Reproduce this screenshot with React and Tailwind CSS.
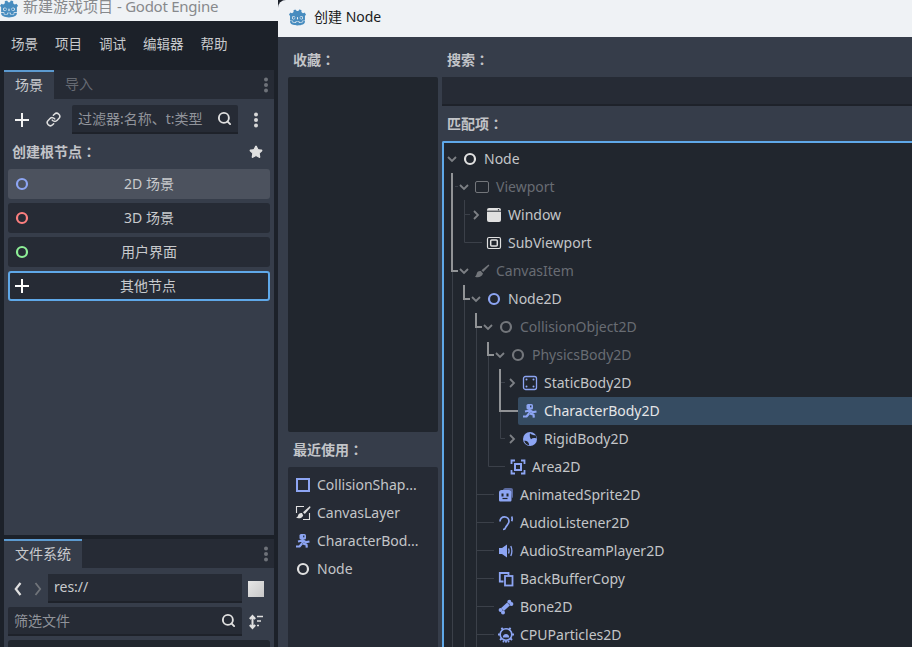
import React from "react";
import { Search, Star, Link as LinkIcon } from "lucide-react";
import { SiGodotengine } from "react-icons/si";

const B = "#8da5f3";
const W = "#e0e0e0";
const D = "#73767b";

const Svg = ({ children, className = "" }) => (
  <svg width="16" height="16" viewBox="0 0 16 16" fill="none" className={"shrink-0 " + className}>{children}</svg>
);

const Ring = ({ c = W, sw = 2.2 }) => (
  <Svg><circle cx="8" cy="8" r="5" stroke={c} strokeWidth={sw} /></Svg>
);
const PlusI = ({ c = "#f2f2f2", className = "" }) => (
  <Svg className={className}><path d="M8 1v14M1 8h14" stroke={c} strokeWidth="2" /></Svg>
);
const ViewportI = () => (
  <Svg><rect x="1.500" y="2.500" width="13" height="11" rx="1.500" stroke={D} strokeWidth="1" /></Svg>
);
const WindowI = () => (
  <Svg><path d="M3 1h10a2 2 0 0 1 2 2v10a2 2 0 0 1-2 2H3a2 2 0 0 1-2-2V3a2 2 0 0 1 2-2z" fill={W} /><path d="M1 4.200h14" stroke="#21262e" strokeWidth="1" /><circle cx="12.500" cy="2.700" r=".7" fill="#21262e" /></Svg>
);
const SubViewportI = () => (
  <Svg><rect x="1.500" y="2.500" width="13" height="11" rx="1.500" stroke={W} strokeWidth="1.200" /><rect x="4.700" y="5" width="6.600" height="6" rx="1" stroke={W} strokeWidth="1.500" /></Svg>
);
const Brush = ({ c = D }) => (
  <Svg><path d="M14.500 1.500 7.500 7.200l1.700 1.700 6.200-6.500z" fill={c} /><path d="M6.800 8c-2.400-.4-3.800 1-4.100 2.800-.2 1.100-.7 2.100-1.700 2.900 2.800 1.100 6.800.6 8-3.200z" fill={c} /></Svg>
);
const StaticI = () => (
  <Svg><rect x="1.500" y="1.500" width="13" height="13" rx="2" stroke={B} strokeWidth="1.300" /><g fill={B}><circle cx="4.500" cy="4.500" r="1" /><circle cx="11.500" cy="4.500" r="1" /><circle cx="4.500" cy="11.500" r="1" /><circle cx="11.500" cy="11.500" r="1" /></g></Svg>
);
const CharI = () => (
  <Svg>
    <rect x="4.500" y="1" width="6.500" height="5.500" rx="1.600" fill={B} />
    <rect x="8" y="2.500" width="1.400" height="1.800" fill="#2f3f55" />
    <path d="M7.500 6v4.500M7.500 7.500 3 8.500M8 7.500l3 1.700 3.500-.7M7 10.500l-2.500 3H1M8 10.500l3.500 1.200.3 3" stroke={B} strokeWidth="2.200" strokeLinejoin="round" />
  </Svg>
);
const RigidI = () => (
  <Svg><circle cx="8" cy="8" r="7" fill={B} /><path d="M8 2.200c1.600 1.400 3.400 2 5.600 2 .6 1 .9 2.400.8 3.400-1.800-.8-4-.6-5.400.6C7.600 6.400 7.600 4 8 2.200z" fill="#21262e" /><path d="M2.200 9.800c2-.6 3.800.4 4.600 2.600l.4 1.900c-2.200-.1-4.200-2-5-4.500z" fill="#21262e" /></Svg>
);
const AreaI = () => (
  <Svg><path d="M1.500 5V1.500H5M11 1.500h3.500V5M14.500 11v3.500H11M5 14.500H1.500V11" stroke={B} strokeWidth="1.800" /><rect x="5" y="5" width="6" height="6" stroke={B} strokeWidth="2" /></Svg>
);
const AnimI = () => (
  <Svg><path d="M5 3c.4-1.300 1.200-2 2.500-2H13c1.200 0 2 .8 2 2v6.500c0 .8-.3 1.300-1 1.700L13 3.500z" fill="#5b6a9f" /><path d="M3.500 3h7.500c1.500 0 2.500 1 2.500 2.500v7.500c0 1-.6 1.500-1.500 1.500H2.500C1.600 14.500 1 14 1 13V5.500C1 4 2 3 3.500 3z" fill={B} /><rect x="3.500" y="6.500" width="2" height="3" fill="#21262e" /><rect x="8.500" y="6.500" width="2" height="3" fill="#21262e" /><path d="M4.500 11.500h5" stroke="#21262e" strokeWidth="1.200" /></Svg>
);
const EarI = () => (
  <Svg><path d="M2 6.500C2 3.500 4 1.800 6.500 1.800S11 3.800 11 6.200c0 3.300-2.700 3.800-3.400 6.300-.3 1.200-1.200 2-2.600 2" stroke={B} strokeWidth="1.700" /><path d="M13.800 1.500c.5 1.500.5 3 0 4.800" stroke={B} strokeWidth="1.700" /></Svg>
);
const SpeakerI = () => (
  <Svg><path d="M1 5h3l5-3.500v13L4 11H1z" fill={B} /><path d="M10.500 5.500c.7 1.600.7 3.400 0 5M12.800 3c1.300 3 1.300 7 0 10" stroke={B} strokeWidth="1.300" /></Svg>
);
const BackI = () => (
  <Svg><path d="M5.500 10.500H1.800V2h8.700v2.500" stroke={B} strokeWidth="1.800" /><rect x="7" y="5" width="7.500" height="9.500" stroke={B} strokeWidth="1.800" /></Svg>
);
const BoneI = () => (
  <Svg><path d="M4.500 10.500 10.500 5" stroke={B} strokeWidth="4" /><circle cx="11.300" cy="2.800" r="2" fill={B} /><circle cx="13.400" cy="5" r="2" fill={B} /><circle cx="2.600" cy="11" r="2" fill={B} /><circle cx="5" cy="13.400" r="2" fill={B} /></Svg>
);
const CpuI = () => (
  <Svg>
    <circle cx="8" cy="7.500" r="5.800" stroke={B} strokeWidth="1.600" />
    <path d="M3.500 .8 5 3M12.500 .8 11 3M0 7.500h2M14 7.500h2M2 13l1.500-1.500M14 13l-1.500-1.500" stroke={B} strokeWidth="1.900" />
    <path d="M4.800 10.500c0-2.200 1.300-3.500 3.200-3.500s3.200 1.300 3.200 3.500z" fill={B} />
    <g fill={B}><circle cx="5.500" cy="14.500" r="1" /><circle cx="8" cy="14.800" r="1" /><circle cx="10.500" cy="14.500" r="1" /></g>
  </Svg>
);
const CollShapeI = () => (
  <Svg><rect x="2" y="2" width="12" height="12" stroke={B} strokeWidth="2" /></Svg>
);
const CanvasLayerI = () => (
  <Svg><path d="M9 1.500H1.500V8M14.500 8v6.500H8" stroke={W} strokeWidth="1.100" /><path d="M15 1 8 7.200l1.800 1.800L15.500 2.500z" fill={W} /><path d="M7 8c-2.300-.3-3.600.8-3.900 2.400-.2 1.100-.9 1.700-2.100 2.300 2.600 1 6 .6 7.200-2.300z" fill={W} /></Svg>
);
const SearchI = () => <Search size={15} color={W} strokeWidth={3} className="shrink-0" />;

const rows = [
  { l: 0, t: "Node", i: <Ring />, a: "d" },
  { l: 1, t: "Viewport", i: <ViewportI />, a: "d", dim: true },
  { l: 2, t: "Window", i: <WindowI />, a: "r" },
  { l: 2, t: "SubViewport", i: <SubViewportI /> },
  { l: 1, t: "CanvasItem", i: <Brush />, a: "d", dim: true },
  { l: 2, t: "Node2D", i: <Ring c={B} />, a: "d" },
  { l: 3, t: "CollisionObject2D", i: <Ring c={D} />, a: "d", dim: true },
  { l: 4, t: "PhysicsBody2D", i: <Ring c={D} />, a: "d", dim: true },
  { l: 5, t: "StaticBody2D", i: <StaticI />, a: "r" },
  { l: 5, t: "CharacterBody2D", i: <CharI />, sel: true },
  { l: 5, t: "RigidBody2D", i: <RigidI />, a: "r" },
  { l: 4, t: "Area2D", i: <AreaI /> },
  { l: 3, t: "AnimatedSprite2D", i: <AnimI /> },
  { l: 3, t: "AudioListener2D", i: <EarI /> },
  { l: 3, t: "AudioStreamPlayer2D", i: <SpeakerI /> },
  { l: 3, t: "BackBufferCopy", i: <BackI /> },
  { l: 3, t: "Bone2D", i: <BoneI /> },
  { l: 3, t: "CPUParticles2D", i: <CpuI /> },
];
const indent = ["pl-0", "pl-[12px]", "pl-[24px]", "pl-[36px]", "pl-[48px]", "pl-[60px]"];

const Arrow = ({ a }) => (
  <span className="w-[16px] flex justify-center shrink-0">
    {a === "d" && <svg width="10" height="10" viewBox="0 0 10 10" fill="none"><path d="M1 3 5 7l4-4" stroke="#7d8085" strokeWidth="1.800" /></svg>}
    {a === "r" && <svg width="10" height="10" viewBox="0 0 10 10" fill="none"><path d="M3 1 7 5 3 9" stroke="#7d8085" strokeWidth="1.800" /></svg>}
  </span>
);

const Thin = "#3b4049";
const Thick = "#919396";

const TreeLines = () => (
  <svg className="absolute left-0 top-0 pointer-events-none" width="470" height="506" viewBox="444 143 470 506" fill="none">
    <g stroke={Thin} strokeWidth="1">
      <path d="M452.500 270V647M464.500 298V647M476.500 326V647" />
      <path d="M455 186.500H458" />
      <path d="M464.500 200V242.500H482M464.500 214.500H470" />
      <path d="M488.500 354V466.500H505" />
      <path d="M500.500 410V438.500H505M500.500 382.500H505" />
      <path d="M476.500 494.500H494M476.500 522.500H494M476.500 550.500H494M476.500 578.500H494M476.500 606.500H494M476.500 634.500H494" />
    </g>
    <g stroke={Thick} strokeWidth="2">
      <path d="M452 173V271H458" />
      <path d="M464 285V299H470" />
      <path d="M476 313V327H482" />
      <path d="M488 342V355H494" />
      <path d="M500 369V411H518" />
    </g>
  </svg>
);

const Row = ({ r }) => (
  <div className={"h-[28px] flex items-center " + indent[r.l]}>
    <Arrow a={r.a} />
    <div className={"h-[28px] flex-1 min-w-0 ml-[-2px] pl-[4px] flex items-center gap-[6px] rounded-l-[2px] relative " + (r.sel ? "bg-[#364c62] text-[#e4e5e7]" : r.dim ? "text-[#686c73]" : "text-[#c3c5c8]")}>
      {r.i}
      <span className="whitespace-nowrap">{r.t}</span>
    </div>
  </div>
);

const Label = ({ text, className = "" }) => (
  <div className={"h-[20px] overflow-hidden font-bold text-[#c2c4c8] text-[14px] leading-[20px] " + className}>
    {text}<span className="leading-none font-['Noto_Sans_CJK_TC',sans-serif]">：</span>
  </div>
);

const SceneBtn = ({ icon, text, active, focus }) => (
  <div className={"h-[30px] flex items-center pr-[2px] rounded-[3px] " + (active ? "bg-[#4c525e]" : "bg-[#262b35]") + (focus ? " border-2 border-[#5fa8e8] pl-[4px] pr-0" : " pl-[6px]")}>
    {icon}
    <span className="flex-1 text-center text-[#c8cacd]">{text}</span>
  </div>
);

const Dots = ({ c = "#8a8d92" }) => (
  <svg width="6" height="16" viewBox="0 0 6 16" className="shrink-0"><g fill={c}><circle cx="3" cy="2.500" r="2" /><circle cx="3" cy="8" r="2" /><circle cx="3" cy="13.500" r="2" /></g></svg>
);

const SortI = () => (
  <Svg>
    <path d="M4.500 2v12M1.800 5 4.500 2 7.200 5M1.800 11l2.700 3 2.700-3" stroke={W} strokeWidth="2" />
    <path d="M9 2.500h6M9 7h4M9 11.500h2" stroke={W} strokeWidth="1.600" />
  </Svg>
);

const recents = [
  [<CollShapeI />, "CollisionShap..."],
  [<CanvasLayerI />, "CanvasLayer"],
  [<CharI />, "CharacterBod..."],
  [<Ring />, "Node"],
];

export default function App() {
  return (
    <div className="w-[912px] h-[647px] overflow-hidden flex bg-[#1c2129] text-[14px] leading-[20px] font-['Noto_Sans','Noto_Sans_CJK_SC',sans-serif]">
      {/* main editor window */}
      <div className="w-[278px] shrink-0 flex flex-col">
        <div className="h-[21px] bg-[#eff2f5] overflow-hidden flex items-end pb-[5px] text-[15px] text-[#87898c] whitespace-nowrap">
          <SiGodotengine size={18} color="#478cbf" className="shrink-0 mb-[-2px] mr-[5px]" />
          <span>新建游戏项目 <span className="tracking-[-0.25px]">- Godot Engine</span></span>
        </div>
        <div className="h-[49px] flex items-center pb-[4px] pl-[11px] gap-[17px] text-[#c8cacd] text-[13.5px]">
          <span>场景</span><span>项目</span><span>调试</span><span>编辑器</span><span>帮助</span>
        </div>
        {/* scene dock */}
        <div className="ml-[4px] w-[270px] h-[465px] bg-[#363d4a] flex flex-col rounded-t-[3px]">
          <div className="h-[29px] bg-[#262b35] flex items-stretch pr-[5px]">
            <div className="w-[50px] bg-[#363d4a] border-t-2 border-[#5c9ad0] pb-[2px] flex items-center justify-center text-[#c8cacd]">场景</div>
            <div className="w-[50px] flex items-center justify-center pb-[1px] text-[#666a72]">导入</div>
            <div className="flex-1" />
            <div className="flex items-center"><Dots c="#6e7279" /></div>
          </div>
          <div className="h-[29px] mt-[6px] flex items-center">
            <PlusI className="ml-[10px]" />
            <LinkIcon size={15} color={W} strokeWidth={2.4} className="ml-[16px] shrink-0" />
            <div className="ml-[11px] w-[166px] h-[29px] bg-[#262b35] border-b-2 border-[#1e222a] rounded-t-[2px] flex items-center pl-[6px] pr-[6px] text-[#90939a]">
              <span className="flex-1 whitespace-nowrap">过滤器:名称、t:类型</span>
              <SearchI />
            </div>
            <div className="ml-[15px]"><Dots c="#d8d8d8" /></div>
          </div>
          <div className="h-[20px] mt-[8px] pl-[8px] pr-[11px] flex items-center justify-between">
            <Label text="创建根节点" />
            <Star size={14} color={W} fill={W} />
          </div>
          <div className="mt-[7px] mx-[4px] flex flex-col gap-[4px]">
            <SceneBtn active icon={<Ring c={B} />} text="2D 场景" />
            <SceneBtn icon={<Ring c="#fc7f7f" />} text="3D 场景" />
            <SceneBtn icon={<Ring c="#8eef97" />} text="用户界面" />
            <SceneBtn focus icon={<PlusI c="#ffffff" />} text="其他节点" />
          </div>
        </div>
        {/* file system dock */}
        <div className="ml-[4px] w-[270px] mt-[4px] flex-1 bg-[#363d4a] flex flex-col rounded-t-[3px]">
          <div className="h-[29px] bg-[#262b35] flex items-stretch pr-[5px]">
            <div className="w-[78px] bg-[#363d4a] border-t-2 border-[#5c9ad0] pb-[2px] flex items-center justify-center text-[#c8cacd]">文件系统</div>
            <div className="flex-1" />
            <div className="flex items-center"><Dots c="#6e7279" /></div>
          </div>
          <div className="h-[29px] mt-[6px] flex items-center">
            <svg width="8" height="14" viewBox="0 0 8 14" fill="none" className="ml-[10px] shrink-0"><path d="M6.500 1 1.800 7l4.700 6" stroke={W} strokeWidth="2.200" /></svg>
            <svg width="8" height="14" viewBox="0 0 8 14" fill="none" className="ml-[12px] shrink-0"><path d="M1.500 1 6.200 7l-4.700 6" stroke="#70747a" strokeWidth="1.800" /></svg>
            <div className="ml-[6px] w-[194px] h-[29px] bg-[#262b35] border-b-2 border-[#1e222a] pl-[6px] pb-[1px] flex items-center text-[#c8cacd]">res://</div>
            <div className="ml-[6px] w-[16px] h-[16px] bg-gradient-to-br from-[#e6e6e6] to-[#c8c8c8]" />
          </div>
          <div className="h-[29px] mt-[4px] flex items-center">
            <div className="ml-[4px] w-[234px] h-[29px] bg-[#262b35] border-b-2 border-[#1e222a] rounded-t-[2px] px-[6px] flex items-center text-[#90939a]">
              <span className="flex-1">筛选文件</span>
              <SearchI />
            </div>
            <div className="ml-[6px]"><SortI /></div>
          </div>
          <div className="mt-[4px] mx-[4px] flex-1 bg-[#21262e] rounded-t-[3px]" />
        </div>
      </div>

      {/* create node dialog */}
      <div className="flex-1 min-w-0 flex flex-col bg-[#363d4a] rounded-tl-[8px] overflow-hidden">
        <div className="h-[37px] shrink-0 bg-[#eff2f5] flex items-center pb-[3px] pl-[11px] gap-[8px] text-[#1b1b1b]">
          <SiGodotengine size={17} color="#478cbf" />
          <span>创建 Node</span>
        </div>
        <div className="flex-1 min-h-0 flex pl-[10px] pt-[13px]">
          <div className="w-[150px] shrink-0 flex flex-col">
            <Label text="收藏" className="pl-[5px]" />
            <div className="mt-[7px] h-[355px] bg-[#21262e] rounded-[2px]" />
            <Label text="最近使用" className="pl-[5px] mt-[8px]" />
            <div className="mt-[7px] flex-1 bg-[#262b35] rounded-t-[2px] pt-[4px] pl-[7px]">
              {recents.map(([ic, t]) => (
                <div key={t} className="h-[28px] flex items-center gap-[6px] text-[#c3c5c8] whitespace-nowrap">{ic}<span>{t}</span></div>
              ))}
            </div>
          </div>
          <div className="ml-[4px] flex-1 min-w-0 flex flex-col">
            <Label text="搜索" className="pl-[5px]" />
            <div className="mt-[7px] h-[29px] shrink-0 bg-[#262b35] border-b-2 border-[#1e222a]" />
            <Label text="匹配项" className="pl-[5px] mt-[8px]" />
            <div className="mt-[7px] flex-1 min-h-0 relative bg-[#21262e] border-l-2 border-t-2 border-[#5fa8e8] rounded-tl-[2px] pt-[2px] overflow-hidden">
              <TreeLines />
              {rows.map((r) => <Row key={r.t} r={r} />)}
            </div>
          </div>
        </div>
      </div>
    </div>
  );
}
